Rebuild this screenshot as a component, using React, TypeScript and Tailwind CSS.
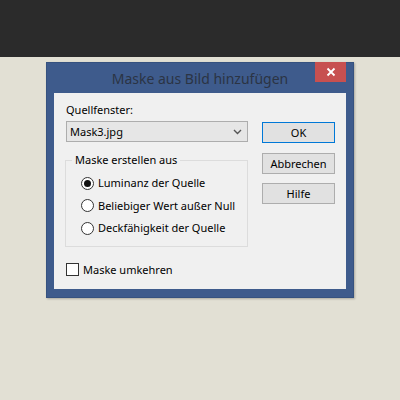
import React from 'react';

// ========================================================================
// Small pieces

const Radio: React.FC<{ label: string; checked?: boolean }> = ({ label, checked }) => (
  <div className="flex items-center h-[22.5px] whitespace-nowrap">
    <span className="w-[13px] h-[13px] shrink-0 rounded-full border border-[#333333] bg-white flex items-center justify-center">
      {checked && <span className="w-[7px] h-[7px] rounded-full bg-[#111111]" />}
    </span>
    <span className="ml-[4px]">{label}</span>
  </div>
);

const Button: React.FC<{ label: string; primary?: boolean; className?: string }> = ({ label, primary, className }) => (
  <div
    className={`h-[21px] w-[73px] flex items-center justify-center bg-[#e1e1e1] border ${
      primary ? 'border-[#0078d7]' : 'border-[#adadad]'
    } ${className || ''}`}
  >
    {label}
  </div>
);

// ========================================================================
// App

export default function App() {
  return (
    <div
      className="w-[400px] h-[400px] bg-[#e2e0d4] flex flex-col overflow-hidden"
      style={{ fontFamily: '"Noto Sans", "Open Sans", sans-serif' }}
    >
      <div className="h-[57px] bg-[#2b2b2b]" />

      <div className="pt-[5px] pl-[46px]">
        {/* Dialog */}
        <div className="w-[308px] bg-[#3e5b8c] border border-[#36527f] shadow-[1px_1px_2px_rgba(0,0,0,0.25)]">
          {/* Title bar */}
          <div className="relative h-[30px] flex items-center justify-center">
            <span className="text-[14px] text-[#2b3444] whitespace-nowrap">Maske aus Bild hinzufügen</span>
            <div className="absolute top-[-1px] right-[7px] w-[31px] h-[20px] bg-[#c75050] flex items-center justify-center">
              <svg width="10" height="10" viewBox="0 0 10 10">
                <path d="M1.5 1.5 L8.5 8.5 M8.5 1.5 L1.5 8.5" stroke="#ffffff" strokeWidth="1.8" />
              </svg>
            </div>
          </div>

          {/* Client area */}
          <div className="mx-[7px] mb-[8px] h-[196px] bg-[#f0f0f0] flex pl-[12px] text-[11px] leading-[16px] text-[#000000]">
            <div className="w-[182px] pt-[9px]">
              <div>Quellfenster:</div>
              <div className="mt-[3px] h-[21px] flex items-center justify-between bg-[#e6e6e6] border border-[#adadad] pl-[3px] pr-[5px]">
                <span>Mask3.jpg</span>
                <svg width="9" height="6" viewBox="0 0 9 6">
                  <path d="M1 1 L4.5 4.5 L8 1" stroke="#555555" strokeWidth="1.4" fill="none" />
                </svg>
              </div>

              <fieldset className="mt-[10px] -ml-[1px] border border-[#dcdcdc] pb-[6px]">
                <legend className="ml-[6px] px-[3px] whitespace-nowrap">Maske erstellen aus</legend>
                <div className="mt-[4px] pl-[15px]">
                  <Radio label="Luminanz der Quelle" checked />
                  <Radio label="Beliebiger Wert außer Null" />
                  <Radio label="Deckfähigkeit der Quelle" />
                </div>
              </fieldset>

              <div className="mt-[15px] flex items-center whitespace-nowrap">
                <span className="w-[13px] h-[13px] shrink-0 border border-[#333333] bg-white" />
                <span className="ml-[4px]">Maske umkehren</span>
              </div>
            </div>

            <div className="ml-[14px] pt-[29px] flex flex-col">
              <Button label="OK" primary />
              <Button label="Abbrechen" className="mt-[10px]" />
              <Button label="Hilfe" className="mt-[9px]" />
            </div>
          </div>
        </div>
      </div>
    </div>
  );
}
